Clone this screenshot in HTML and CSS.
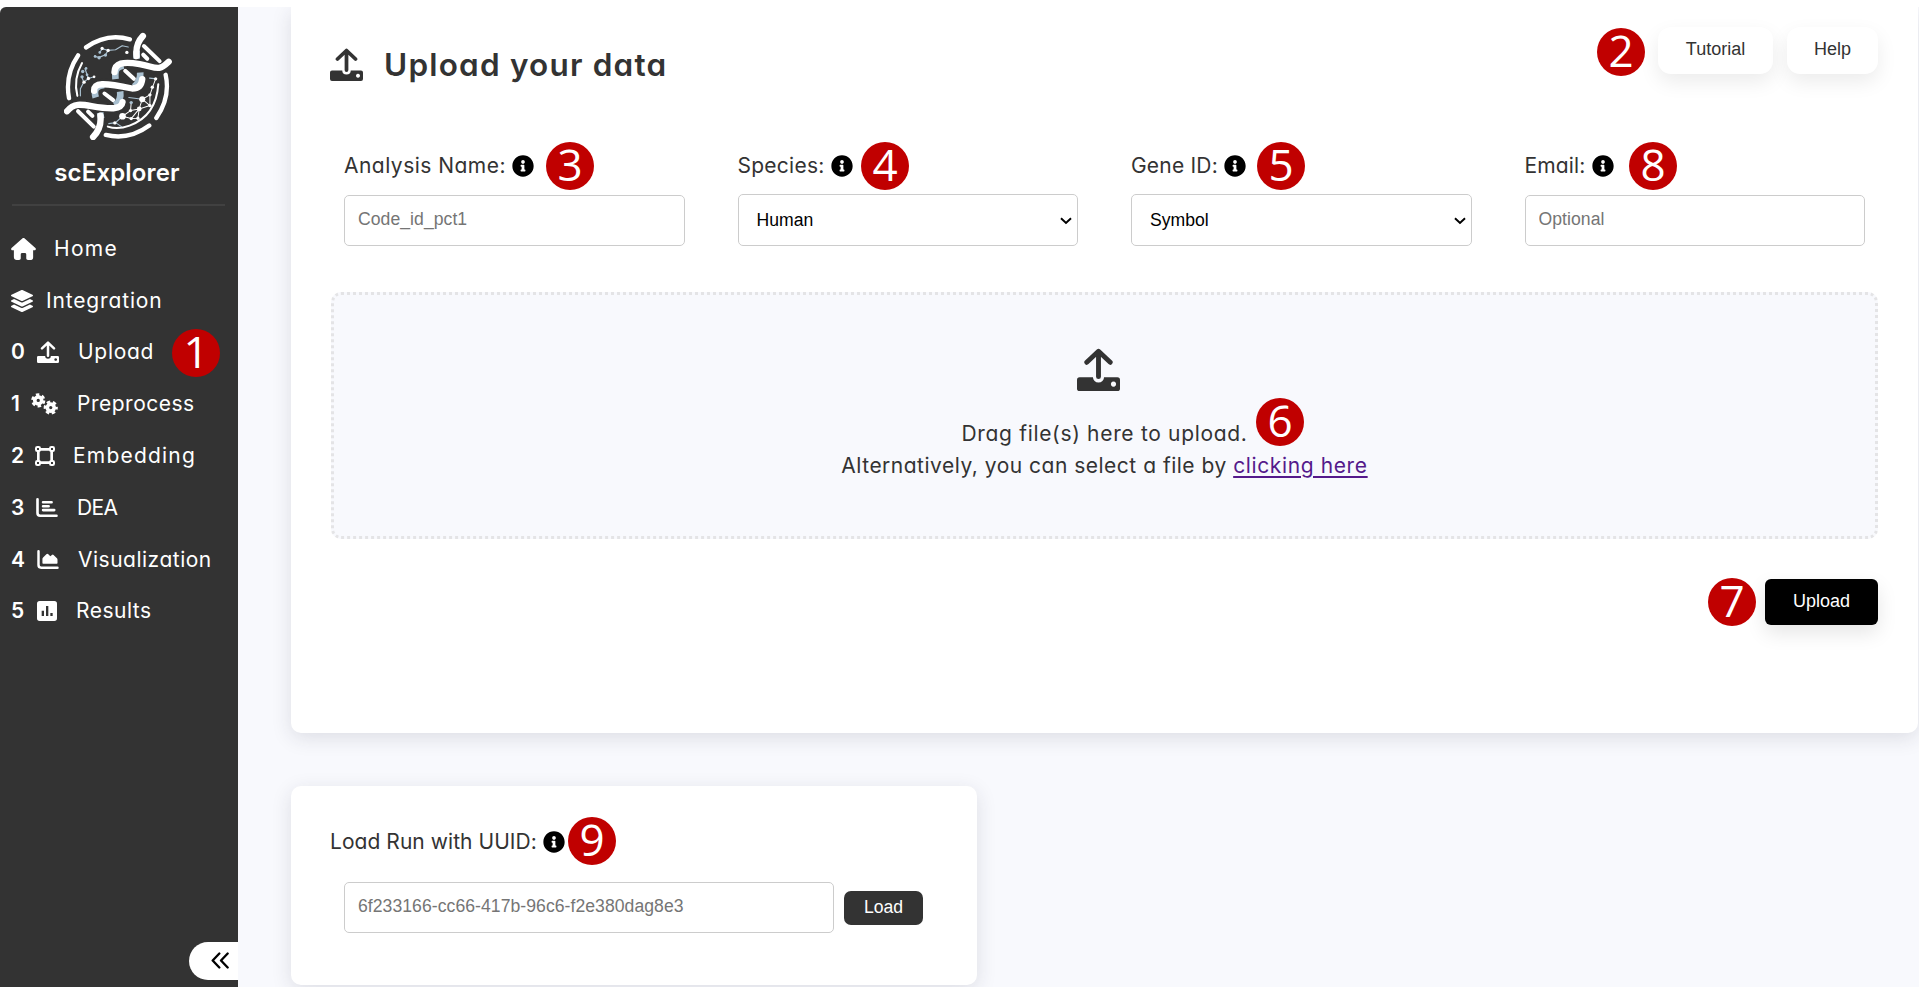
FILE: index.html
```html
<!DOCTYPE html>
<html lang="en">
<head>
<meta charset="utf-8">
<title>scExplorer</title>
<link rel="stylesheet" href="styles.css">
</head>
<body>
<svg class="defs" aria-hidden="true">
  <symbol id="i-upload" viewBox="0 0 66 66">
    <path d="M33 44V8M15 22 33 5l18 17" fill="none" stroke="currentColor" stroke-width="7.5" stroke-linecap="round" stroke-linejoin="round"/>
    <path fill="currentColor" fill-rule="evenodd" d="M4 45h20.500a8.500 8 0 0 0 17 0H62q4 0 4 4v13q0 4-4 4H4q-4 0-4-4V49q0-4 4-4zM56 51.500a4 4 0 1 0 .01 0z"/>
  </symbol>
  <symbol id="i-info" viewBox="0 0 512 512"><path fill="currentColor" d="M256 8C119 8 8 119 8 256s111 248 248 248 248-111 248-248S393 8 256 8zm0 110c23.200 0 42 18.800 42 42s-18.800 42-42 42-42-18.800-42-42 18.800-42 42-42zm56 254c0 6.600-5.400 12-12 12h-88c-6.600 0-12-5.400-12-12v-24c0-6.600 5.400-12 12-12h12v-64h-12c-6.600 0-12-5.400-12-12v-24c0-6.600 5.400-12 12-12h64c6.600 0 12 5.400 12 12v100h12c6.600 0 12 5.400 12 12v24z"/></symbol>
</svg>
<div class="app">
  <aside class="sidebar">
    <svg class="logo" viewBox="194 94 323 323" fill="none" stroke-linecap="round" stroke-linejoin="round">
      <g stroke="#fff" stroke-width="13">
        <path d="M260 140Q322 96 391 116M236 164Q196 222 209 292M498 222Q513 290 470 351M449 374Q388 419 319 402"/>
      </g>
      <path stroke="#fff" stroke-width="6" d="M248 187Q221 235 234 285M476 250Q470 345 390 374Q355 387 325 377"/>
      <g stroke="#a9c0d0" stroke-width="3.500">
        <path d="M285 167l14 3 19-8 8-13-17-5-9 12M326 149l22-2 20-12 18 4M243 285v-21l10-20-6-17M253 244l14-11-4-11-6-18M267 233l17-5M328 368l20-3 21-19M348 365l18 12M388 290l40 5M470 234l-20-2"/>
      </g>
      <g stroke="#fff" stroke-width="3">
        <path d="M369 346l26 7 20-1 4-28 32-10v-32l8-23 9-25M395 353l24-29 9-29 23-13M393 329l26-5M393 329l2-24M369 346l24-17M428 295l23 19"/>
      </g>
      <g fill="#a9c0d0"><circle cx="287" cy="167" r="4"/><circle cx="299" cy="171" r="5"/><circle cx="318" cy="163" r="5"/><circle cx="301" cy="155" r="4"/><circle cx="250" cy="212" r="5"/><circle cx="260" cy="203" r="4"/><circle cx="248" cy="228" r="5"/><circle cx="263" cy="222" r="4"/><circle cx="395" cy="305" r="5"/></g>
      <g fill="#fff"><circle cx="308" cy="143" r="5"/><circle cx="326" cy="149" r="5"/><circle cx="382" cy="155" r="5"/><circle cx="284" cy="228" r="4"/><circle cx="254" cy="244" r="5"/><circle cx="267" cy="233" r="5"/><circle cx="369" cy="346" r="10"/><circle cx="428" cy="295" r="9"/><circle cx="419" cy="324" r="7"/><circle cx="393" cy="329" r="5"/><circle cx="395" cy="353" r="5"/><circle cx="415" cy="352" r="5"/><circle cx="451" cy="314" r="5"/><circle cx="451" cy="282" r="5"/><circle cx="458" cy="259" r="5"/><circle cx="468" cy="234" r="5"/><circle cx="346" cy="366" r="5"/></g>
      <g stroke="#333" stroke-width="36" stroke-linecap="butt"><path d="M430 106Q408 128 411 175M302 335Q310 380 281 408M203 331C235 292 270 324 350 321M286 286C278 245 310 245 400 264M346 232C345 185 375 180 420 188S475 214 508 183"/></g>
      <path stroke="#fff" stroke-width="12" d="M433 136l47 45M431 162l12 12M236 331l47 46M266 332l13 13M377 210l26 24M315 278l26 20"/>
      <path stroke="#a9c0d0" stroke-width="20" stroke-linecap="butt" d="M348 235C345 204 353 198 372 194M422 215Q424 240 404 258M289 290C281 262 294 255 314 252M362 272Q366 300 346 314M411 150v24M302 335l3 18"/>
      <g stroke="#fff" stroke-width="19">
        <path d="M430 106Q407 130 411 166M303 344Q307 382 281 408"/>
        <path d="M203 331C235 292 270 324 342 322Q367 320 369 304M284 270C284 245 310 245 398 263Q425 263 428 235M345 214C346 187 370 181 420 190S475 214 507 183"/>
      </g>
    </svg>
    <div class="brand">scExplorer</div>
    <nav class="nav">
      <a class="item home"><svg class="ico" viewBox="0 0 576 512"><path fill="currentColor" d="M575.800 255.500c0 18-15 32.100-32 32.100h-32l.7 160.200c0 40-20 64-48 64H392c-22 0-40-18-40-40v-88c0-17.700-14.300-32-32-32h-64c-17.700 0-32 14.300-32 32v88c0 22-18 40-40 40h-55.900c-35 0-64.100-20-64.100-64V287.600H32c-18 0-32-14-32-32.100 0-9 3-17 10-24L266.400 8c7-7 15-8 22-8s15 2 21 7l255.400 224.500c8 7 12 15 11 24z"/></svg><span>Home</span></a>
      <a class="item integration"><svg class="ico" viewBox="0 0 512 512"><path fill="currentColor" d="M12.400 148l232.900 105.700c6.800 3.100 14.500 3.100 21.300 0l233-105.700c16.500-7.500 16.500-32.500 0-40L266.600 2.300a25.600 25.600 0 0 0-21.300 0L12.400 108c-16.500 7.500-16.500 32.500 0 40zm487.200 88.300l-58.100-26.300-161.600 73.300a57.600 57.600 0 0 1-47.800 0L70.500 210l-58.100 26.300c-16.500 7.500-16.500 32.500 0 40l232.900 105.600c6.800 3.100 14.500 3.100 21.300 0l233-105.600c16.500-7.500 16.500-32.500 0-40zm0 127.800l-57.900-26.200-161.900 73.300a57.600 57.600 0 0 1-47.800 0L70.300 337.900l-57.900 26.200c-16.500 7.500-16.500 32.500 0 40l232.900 105.600c6.800 3.100 14.500 3.100 21.300 0l233-105.600c16.500-7.500 16.500-32.500 0-40z"/></svg><span>Integration</span></a>
      <a class="item upload"><b>0</b><svg class="ico"><use href="#i-upload"/></svg><span>Upload</span></a>
      <a class="item preprocess"><b>1</b><svg class="ico" viewBox="0 0 82 66"><g fill="none" stroke="currentColor"><circle cx="22" cy="22" r="10.500" stroke-width="11"/><circle cx="22" cy="22" r="17.500" stroke-width="8" stroke-dasharray="10.330 8"/><circle cx="60" cy="44" r="10.500" stroke-width="11"/><circle cx="60" cy="44" r="17.500" stroke-width="8" stroke-dasharray="10.330 8" stroke-dashoffset="5"/></g></svg><span>Preprocess</span></a>
      <a class="item embedding"><b>2</b><svg class="ico" viewBox="0 0 60 60"><g fill="none" stroke="currentColor" stroke-width="8"><path d="M10 10h40v40H10z"/><g fill="#333" stroke-width="6"><rect x="3" y="3" width="12" height="12" rx="4"/><rect x="45" y="3" width="12" height="12" rx="4"/><rect x="3" y="45" width="12" height="12" rx="4"/><rect x="45" y="45" width="12" height="12" rx="4"/></g></g></svg><span>Embedding</span></a>
      <a class="item dea"><b>3</b><svg class="ico" viewBox="0 0 66 58"><path d="M4 4v42q0 8 8 8h50M21 13h26M21 25h17M21 37h34" fill="none" stroke="currentColor" stroke-width="8" stroke-linecap="round"/></svg><span>DEA</span></a>
      <a class="item visualization"><b>4</b><svg class="ico" viewBox="0 0 66 58"><path d="M4 4v42q0 8 8 8h50" fill="none" stroke="currentColor" stroke-width="7.500" stroke-linecap="round"/><path fill="currentColor" d="M16 40V27q0-2 2-4l10-10q3-3 6 0l6 6 5-4q3-2 5 0l11 11q1 2 1 4v10q0 2-2 2H18q-2 0-2-2z"/></svg><span>Visualization</span></a>
      <a class="item results"><b>5</b><svg class="ico" viewBox="0 0 60 60"><path fill="currentColor" fill-rule="evenodd" d="M8 0h44q8 0 8 8v44q0 8-8 8H8q-8 0-8-8V8q0-8 8-8zM14 29v16h7V29zM27 15v30h7V15zM40 36v9h7v-9z"/></svg><span>Results</span></a>
    </nav>
    <button class="collapse" aria-label="Collapse"><svg viewBox="0 0 54 50"><path d="M25 4 5 25l20 21M50 4 30 25l20 21" fill="none" stroke="#000" stroke-width="7" stroke-linecap="round" stroke-linejoin="round"/></svg></button>
  </aside>
  <main class="main">
    <section class="card upload-card">
      <header class="head">
        <svg class="head-ico"><use href="#i-upload"/></svg>
        <h1>Upload your data</h1>
        <div class="actions"><button class="soft">Tutorial</button><button class="soft">Help</button></div>
      </header>
      <div class="fields">
        <div class="field"><label class="l-name"><span>Analysis Name:</span><svg class="info"><use href="#i-info"/></svg></label><input type="text" placeholder="Code_id_pct1"></div>
        <div class="field"><label class="l-species"><span>Species:</span><svg class="info"><use href="#i-info"/></svg></label><div class="select"><span>Human</span><svg viewBox="0 0 36 24"><path d="M3 4 18 18 33 4" fill="none" stroke="#000" stroke-width="6"/></svg></div></div>
        <div class="field"><label class="l-gene"><span>Gene ID:</span><svg class="info"><use href="#i-info"/></svg></label><div class="select"><span>Symbol</span><svg viewBox="0 0 36 24"><path d="M3 4 18 18 33 4" fill="none" stroke="#000" stroke-width="6"/></svg></div></div>
        <div class="field"><label class="l-email"><span>Email:</span><svg class="info"><use href="#i-info"/></svg></label><input type="text" placeholder="Optional"></div>
      </div>
      <div class="drop">
        <svg class="drop-ico"><use href="#i-upload"/></svg>
        <p class="drag">Drag file(s) here to upload.</p>
        <p class="alt">Alternatively, you can select a file by <a href="#">clicking here</a></p>
      </div>
      <div class="submit"><button class="primary">Upload</button></div>
    </section>
    <section class="card run-card">
      <label class="l-uuid"><span>Load Run with UUID:</span><svg class="info"><use href="#i-info"/></svg></label>
      <div class="run-row"><input type="text" placeholder="6f233166-cc66-417b-96c6-f2e380dag8e3"><button class="load">Load</button></div>
    </section>
  </main>
</div>
<div class="mark m1">1</div><div class="mark m2">2</div><div class="mark m3">3</div>
<div class="mark m4">4</div><div class="mark m5">5</div><div class="mark m6">6</div>
<div class="mark m7">7</div><div class="mark m8">8</div><div class="mark m9">9</div>
</body>
</html>
```
FILE: styles.css
```css
* { box-sizing: border-box; }
body { margin: 0; background: #fff; color: #333; font: 21px/32px Inter, sans-serif; font-feature-settings: "cv11"; height: 997px; overflow: hidden; position: relative; }
.defs { display: none; }
svg { display: block; flex: none; }
button, input, .select { font-family: "Liberation Sans", Arial, sans-serif; font-feature-settings: normal; }
button { border: 0; padding: 0; }
.app { margin-top: 7px; height: 980px; display: grid; grid-template-columns: 238px 1fr; overflow: hidden; background: #f8f9fd; border-top-left-radius: 6px; }

.sidebar { background: #333; color: #fff; display: flex; flex-direction: column; height: 980px; }
.logo { width: 108px; height: 108px; margin: 25px 0 0 64px; }
.brand { margin: 16px 13px 0 12px; height: 50px; line-height: 34px; padding-right: 3px; text-align: center; font-size: 24px; font-weight: 600; letter-spacing: .15px; border-bottom: 2px solid #414141; }
.nav { padding-top: 17px; }
.item { display: flex; align-items: center; height: 51.800px; padding-left: 11px; white-space: nowrap; }
.item b { width: 26px; font-weight: 600; flex: none; }
.ico { width: 22px; height: 22px; margin-right: 19px; }
.home .ico { width: 25px; margin-right: 18px; }
.home span { letter-spacing: 1.300px; }
.integration .ico { margin-right: 13px; }
.integration span { letter-spacing: .85px; }
.upload span { letter-spacing: .7px; }
.preprocess b { width: 20px; }
.preprocess .ico { width: 27px; }
.preprocess span { letter-spacing: .5px; }
.embedding b { width: 24px; }
.embedding .ico { width: 20px; height: 20px; margin-right: 18px; }
.embedding span { letter-spacing: 1.200px; }
.dea b { width: 25px; }
.dea .ico, .visualization .ico { height: 19px; }
.dea span { letter-spacing: -.6px; }
.visualization span { letter-spacing: .5px; }
.results .ico { width: 20px; height: 20px; }
.results span { letter-spacing: .5px; }
.collapse { margin: auto 0 7px auto; width: 49px; height: 38px; background: #fff; border-radius: 19px 0 0 19px; display: flex; align-items: center; padding-left: 22px; }
.collapse svg { width: 18px; height: 17px; margin-top: -2px; }

.main { padding-left: 53px; }
.card { background: #fff; box-shadow: 0 5px 20px rgba(40, 40, 60, .13); }
.upload-card { width: 1627px; height: 726px; padding: 20px 40px 0; border-radius: 0 0 10px 10px; }
.head { display: flex; align-items: flex-start; height: 121px; }
.head-ico { width: 33px; height: 33px; margin: 21px 21px 0 -1px; }
h1 { margin: 18px 0 0; font-size: 31.500px; line-height: 40px; font-weight: 600; letter-spacing: 1.200px; white-space: nowrap; }
.actions { display: flex; gap: 14px; margin-left: auto; }
.soft { width: 91px; height: 47px; padding-bottom: 3px; border-radius: 13px; background: #fff; color: #333; font-size: 18px; box-shadow: 0 8px 20px rgba(0, 0, 0, .08); }
.soft:first-child { width: 115px; }
.fields { display: grid; grid-template-columns: repeat(4, 340.500px); gap: 53px; padding-left: 13px; }
.field { height: 144px; display: flex; flex-direction: column; }
label { display: flex; align-items: center; white-space: nowrap; height: 34px; margin-bottom: 12px; padding-top: 2px; }
.l-name span { letter-spacing: .48px; }
.l-species span { letter-spacing: .25px; }
.l-gene span { letter-spacing: .2px; }
.l-email span { letter-spacing: .15px; }
.l-uuid span { letter-spacing: .05px; }
.info { width: 22px; height: 22px; margin-left: 6px; color: #000; }
input { display: block; height: 51px; margin-top: 1px; padding: 0 13px 3px; border: 1px solid #ccc; border-radius: 5px; background: #fff; font-size: 17.600px; letter-spacing: .05px; outline: 0; }
input::placeholder { color: #757575; opacity: 1; }
.select { display: flex; align-items: center; justify-content: space-between; height: 52px; padding: 0 5px 0 18px; border: 1px solid #ccc; border-radius: 5px; color: #000; font-size: 17.600px; }
.select svg { width: 12px; height: 8px; margin-top: 2px; }
.drop { width: 1547px; height: 247px; border: 3px dotted #e4e4e6; border-radius: 10px; background: #f8f9fd; display: flex; flex-direction: column; align-items: center; padding-top: 53px; }
.drop-ico { width: 43px; height: 43px; margin: 0 13px 27px 0; }
.drop p { margin: 0; height: 32px; white-space: nowrap; }
.drag { letter-spacing: .68px; }
.alt { letter-spacing: .5px; }
.drop a { color: #551a8b; letter-spacing: .62px; text-underline-offset: 3px; }
.submit { display: flex; justify-content: flex-end; padding-top: 40px; }
.primary { width: 113px; height: 46px; padding-bottom: 1px; border-radius: 6px; background: #000; color: #fff; font-size: 18px; box-shadow: 0 8px 20px rgba(0, 0, 0, .1); }
.run-card { width: 686px; height: 199px; margin-top: 53px; padding: 38px 40px 0; border-radius: 10px; }
.run-card label { margin-left: -1px; margin-bottom: 24px; }
.run-row { display: flex; align-items: center; gap: 10px; padding-left: 13px; }
.run-row input { width: 490px; margin: 0; }
.load { width: 79px; height: 34px; border-radius: 7px; background: #333; color: #fff; font-size: 17.600px; }

.mark { position: absolute; width: 48px; height: 48px; border-radius: 50%; background: #c00000; color: #fff; font: 44px/44px "Open Sans", sans-serif; text-align: center; }
.m1 { left: 172px; top: 329px; }
.m2 { left: 1597px; top: 28px; }
.m3 { left: 546px; top: 142px; }
.m4 { left: 861px; top: 142px; }
.m5 { left: 1257px; top: 142px; }
.m6 { left: 1256px; top: 398px; }
.m7 { left: 1708px; top: 578px; }
.m8 { left: 1629px; top: 142px; }
.m9 { left: 568px; top: 817px; }
```
